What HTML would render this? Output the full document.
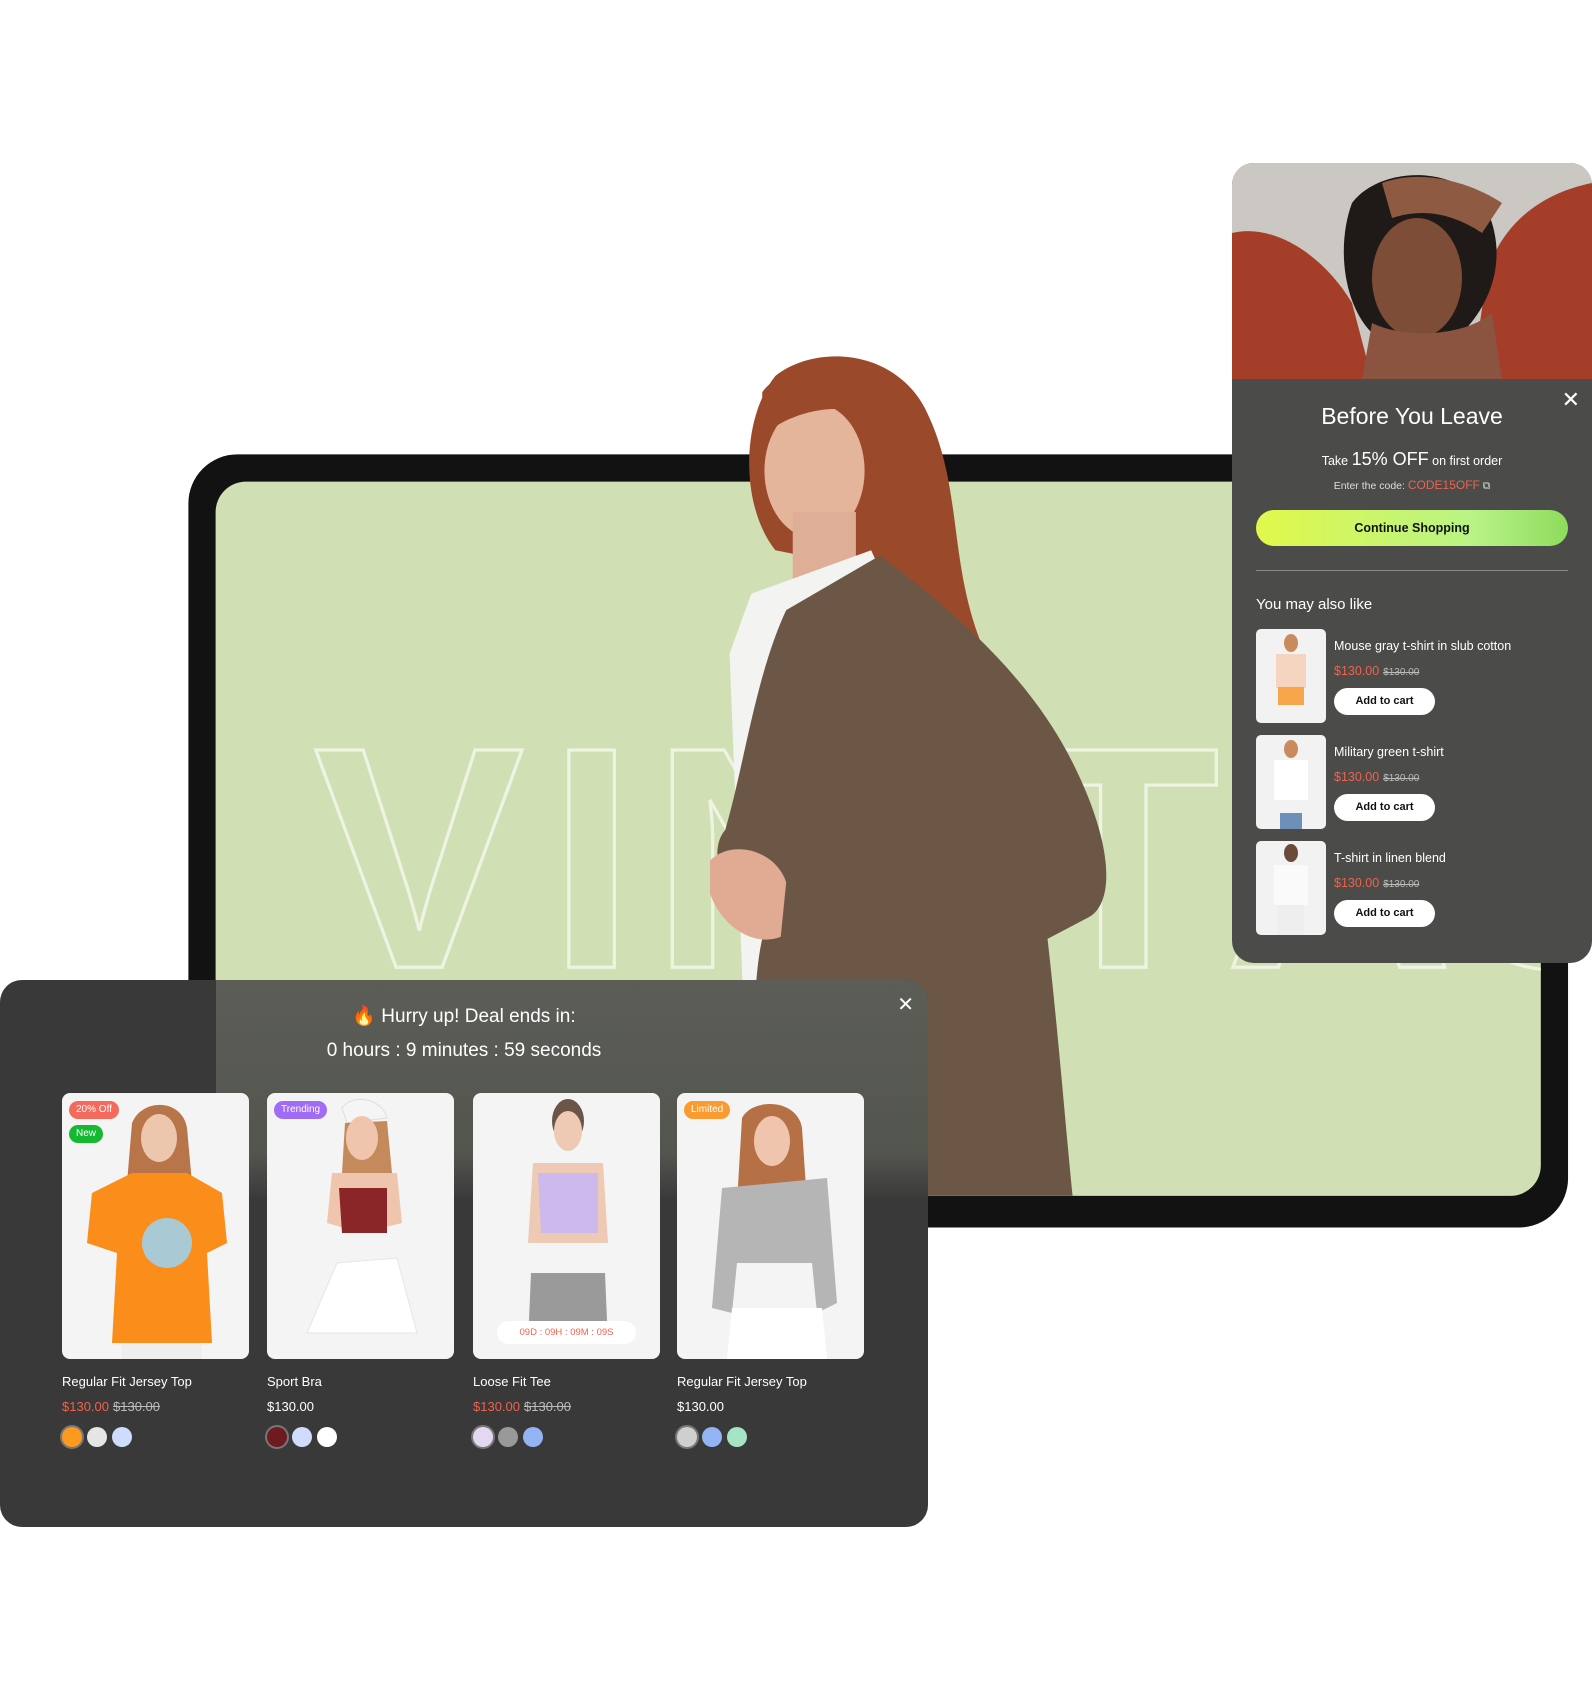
<!DOCTYPE html>
<html><head><meta charset="utf-8"><style>
*{margin:0;padding:0;box-sizing:border-box}
body{width:1592px;height:1708px;background:#fff;position:relative;overflow:hidden;font-family:"Liberation Sans",sans-serif}
.abs{position:absolute}
#bg{position:absolute;left:0;top:0}
.pop2{left:1232px;top:163px;width:360px;height:800px;border-radius:22px;overflow:hidden;background:#4b4c49}
.pop1{left:0;top:980px;width:928px;height:547px;border-radius:22px;overflow:hidden;background:#393939}
.card{position:absolute;top:113px;width:187px;height:266px;border-radius:8px;background:#f4f4f4;overflow:hidden}
.badge{position:absolute;left:7px;height:18px;border-radius:9px;color:#fff;font-size:10px;line-height:18px;padding:0 7px}
.nm{position:absolute;top:394px;color:#fff;font-size:13px}
.pr{position:absolute;top:419px;font-size:13px;color:#fff}
.red{color:#f0624d}
.old{color:#bbb;text-decoration:line-through;margin-left:4px}
.sw{position:absolute;top:447px;display:flex;gap:5px}
.sw i{display:block;width:20px;height:20px;border-radius:50%}
.it{position:absolute;left:24px;width:320px;height:94px}
.th{position:absolute;left:0;top:0;width:70px;height:94px;border-radius:5px;background:#f2f2f2;overflow:hidden}
.it .t{position:absolute;left:78px;top:10px;color:#fff;font-size:12.5px}
.it .p{position:absolute;left:78px;top:35px;font-size:12.5px}
.it .b{position:absolute;left:78px;top:59px;width:101px;height:27px;border-radius:14px;background:#fff;color:#111;font-size:11px;font-weight:bold;text-align:center;line-height:27px}
</style></head><body>
<svg id="bg" width="1592" height="1708" viewBox="0 0 1462 1568">
<defs><clipPath id="scr"><rect x="198" y="442" width="1217" height="656" rx="28"/></clipPath>
<clipPath id="wom"><rect x="0" y="0" width="1462" height="1098"/></clipPath></defs>
<rect x="173" y="417" width="1267" height="710" rx="45" fill="#121212"/>
<rect x="198" y="442" width="1217" height="656" rx="28" fill="#d0e0b4"/>
<g clip-path="url(#scr)">
<text x="288 503 598 943 1125 1320 1540" y="888" font-family="Liberation Sans" font-weight="bold" font-size="290" fill="none" stroke="#eef3e2" stroke-width="3">VINTAGE</text>
</g>
<g clip-path="url(#wom)">
<path d="M712,345 C750,315 825,320 852,380 C885,450 870,520 905,600 C925,650 900,680 872,645 C845,605 830,565 812,525 L712,505 C680,465 680,385 712,345Z" fill="#9a4a2a"/>
<ellipse cx="748" cy="432" rx="46" ry="62" fill="#e4b49b"/>
<path d="M700,360 C720,330 790,330 800,380 C770,370 730,375 700,400Z" fill="#9a4a2a"/>
<rect x="728" y="470" width="58" height="65" fill="#dfae96"/>
<path d="M690,545 L800,505 L825,560 L720,905 L682,905 L670,600Z" fill="#f3f3f1"/>
<path d="M722,560 L808,510 C875,560 945,620 985,700 C1025,780 1022,830 1000,842 L962,862 C972,950 980,1050 985,1098 L700,1098 C690,1000 690,905 700,862 C665,832 648,782 666,762 C684,700 694,620 722,560Z" fill="#6c5747"/>
<path d="M652,790 C672,770 712,780 722,810 L717,860 C692,870 662,850 652,820Z" fill="#e0ab92"/>
</g>
</svg>

<div class="abs pop2">
<svg width="360" height="216" viewBox="0 0 360 216" style="display:block">
<rect width="360" height="216" fill="#cbc7c2"/>
<path d="M0,70 C40,60 90,90 120,140 L140,216 L0,216Z" fill="#a43e29"/>
<path d="M360,20 C310,30 270,60 255,110 L240,216 L360,216Z" fill="#a43e29"/>
<path d="M120,40 C150,0 240,0 260,60 C275,110 250,150 230,170 L140,170 C110,140 105,80 120,40Z" fill="#1f1a17"/>
<ellipse cx="185" cy="115" rx="45" ry="60" fill="#7d4d37"/>
<path d="M140,160 C170,175 230,175 260,150 L270,216 L130,216Z" fill="#8a5440"/>
<path d="M150,20 C190,5 240,20 270,40 L250,70 C220,50 190,45 160,55Z" fill="#8e5a42"/>
</svg>
<div class="abs" style="right:12px;top:224px;color:#fff;font-size:22px">✕</div>
<div class="abs" style="left:0;width:360px;top:240px;text-align:center;color:#fff;font-size:23px">Before You Leave</div>
<div class="abs" style="left:0;width:360px;top:286px;text-align:center;color:#fff;font-size:12.5px">Take <span style="font-size:18px">15% OFF</span> on first order</div>
<div class="abs" style="left:0;width:360px;top:315px;text-align:center;color:#ddd;font-size:10.5px">Enter the code: <span class="red" style="font-size:12px">CODE15OFF</span> ⧉</div>
<div class="abs" style="left:24px;top:347px;width:312px;height:36px;border-radius:18px;background:linear-gradient(90deg,#e1f84a,#b8f387 70%,#8ddc5d);text-align:center;line-height:36px;font-size:12.5px;font-weight:bold;color:#111">Continue Shopping</div>
<div class="abs" style="left:24px;top:407px;width:312px;height:1px;background:#8a8a88"></div>
<div class="abs" style="left:24px;top:433px;color:#fff;font-size:15px">You may also like</div>
<div class="it" style="top:466px"><div class="th"><svg width="70" height="94"><ellipse cx="35" cy="14" rx="7" ry="9" fill="#c98b5e"/><rect x="20" y="25" width="30" height="34" fill="#f5d4c0"/><rect x="22" y="58" width="26" height="18" fill="#f7a64c"/></svg></div><div class="t">Mouse gray t-shirt in slub cotton</div><div class="p"><span class="red">$130.00</span><span class="old" style="font-size:10px">$130.00</span></div><div class="b">Add to cart</div></div>
<div class="it" style="top:572px"><div class="th"><svg width="70" height="94"><ellipse cx="35" cy="14" rx="7" ry="9" fill="#c98b5e"/><rect x="18" y="25" width="34" height="40" fill="#fff"/><rect x="24" y="78" width="22" height="16" fill="#6d8fb8"/></svg></div><div class="t">Military green t-shirt</div><div class="p"><span class="red">$130.00</span><span class="old" style="font-size:10px">$130.00</span></div><div class="b">Add to cart</div></div>
<div class="it" style="top:678px"><div class="th"><svg width="70" height="94"><ellipse cx="35" cy="12" rx="7" ry="9" fill="#6b4a3a"/><rect x="18" y="24" width="34" height="40" fill="#fafafa"/><rect x="22" y="64" width="26" height="30" fill="#eee"/></svg></div><div class="t">T-shirt in linen blend</div><div class="p"><span class="red">$130.00</span><span class="old" style="font-size:10px">$130.00</span></div><div class="b">Add to cart</div></div>
</div>

<div class="abs pop1">
<div class="abs" style="left:216px;top:0;width:712px;height:216px;background:linear-gradient(180deg,#5b5d56,#53554f 80%,#3c3c3c)"></div>
<div class="abs" style="right:14px;top:12px;color:#fff;font-size:20px">✕</div>
<div class="abs" style="left:0;width:928px;top:24px;text-align:center;color:#fff;font-size:19px"><span style="color:#f26b2c">🔥</span> Hurry up! Deal ends in:</div>
<div class="abs" style="left:0;width:928px;top:60px;text-align:center;color:#fff;font-size:19px">0 hours : 9 minutes : 59 seconds</div>

<div class="card" style="left:62px"><svg width="187" height="266"><path d="M70,30 C80,5 120,5 125,35 L130,90 L65,90Z" fill="#b9754a"/><ellipse cx="97" cy="45" rx="18" ry="24" fill="#edc6ae"/><path d="M30,100 L70,80 L125,80 L160,100 L165,150 L145,160 L150,250 L50,250 L55,160 L25,150Z" fill="#fb8d1a"/><circle cx="105" cy="150" r="25" fill="#a9c9d4"/><rect x="60" y="250" width="80" height="16" fill="#eee"/></svg>
<div class="badge" style="top:8px;background:#f46a5d">20% Off</div><div class="badge" style="top:32px;background:#16b832">New</div></div>
<div class="card" style="left:267px"><svg width="187" height="266"><path d="M75,15 C85,0 115,5 120,25 L80,30Z" fill="#f5f5f5" stroke="#ddd"/><path d="M78,30 L120,28 L125,80 L75,80Z" fill="#c58a5c"/><ellipse cx="95" cy="45" rx="16" ry="22" fill="#efc6ad"/><path d="M65,80 L130,80 L135,130 L95,140 L60,130Z" fill="#efc6ad"/><path d="M72,95 L120,95 L120,140 L75,140Z" fill="#8a2528"/><path d="M70,170 L130,165 L150,240 L40,240Z" fill="#fff" stroke="#e6e6e6"/></svg>
<div class="badge" style="top:8px;background:#a16cf5">Trending</div></div>
<div class="card" style="left:473px"><svg width="187" height="266"><ellipse cx="95" cy="28" rx="16" ry="22" fill="#6b5448"/><ellipse cx="95" cy="38" rx="14" ry="20" fill="#eec9b3"/><path d="M60,70 L130,70 L135,150 L55,150Z" fill="#eec9b3"/><path d="M65,80 L125,80 L125,140 L68,140Z" fill="#cdb9ec"/><path d="M58,180 L132,180 L135,250 L55,250Z" fill="#9a9a9a"/></svg>
<div class="abs" style="left:24px;top:228px;width:139px;height:23px;border-radius:12px;background:#fff;color:#f0624d;font-size:9.5px;text-align:center;line-height:23px">09D : 09H : 09M : 09S</div></div>
<div class="card" style="left:677px"><svg width="187" height="266"><path d="M65,25 C75,5 120,5 125,35 L130,110 L60,110Z" fill="#b57045"/><ellipse cx="95" cy="48" rx="18" ry="25" fill="#efc6ad"/><path d="M45,95 L150,85 L160,210 L140,220 L135,170 L60,170 L55,220 L35,215Z" fill="#b5b5b5"/><path d="M55,215 L145,215 L150,266 L50,266Z" fill="#fff"/></svg>
<div class="badge" style="top:8px;background:#fb9a2e">Limited</div></div>

<div class="nm" style="left:62px">Regular Fit Jersey Top</div>
<div class="nm" style="left:267px">Sport Bra</div>
<div class="nm" style="left:473px">Loose Fit Tee</div>
<div class="nm" style="left:677px">Regular Fit Jersey Top</div>
<div class="pr" style="left:62px"><span class="red">$130.00</span><span class="old">$130.00</span></div>
<div class="pr" style="left:267px">$130.00</div>
<div class="pr" style="left:473px"><span class="red">$130.00</span><span class="old">$130.00</span></div>
<div class="pr" style="left:677px">$130.00</div>
<div class="sw" style="left:62px"><i style="background:#fb9a1e;box-shadow:0 0 0 2px #777"></i><i style="background:#e5e5e5"></i><i style="background:#cfdcfb"></i></div>
<div class="sw" style="left:267px"><i style="background:#6e1a20;box-shadow:0 0 0 2px #777"></i><i style="background:#cfdcfb"></i><i style="background:#fff"></i></div>
<div class="sw" style="left:473px"><i style="background:#e3d7f2;box-shadow:0 0 0 2px #777"></i><i style="background:#999"></i><i style="background:#94b3f5"></i></div>
<div class="sw" style="left:677px"><i style="background:#cfcfcf;box-shadow:0 0 0 2px #777"></i><i style="background:#94b3f5"></i><i style="background:#a5e5c5"></i></div>
</div>
</body></html>
